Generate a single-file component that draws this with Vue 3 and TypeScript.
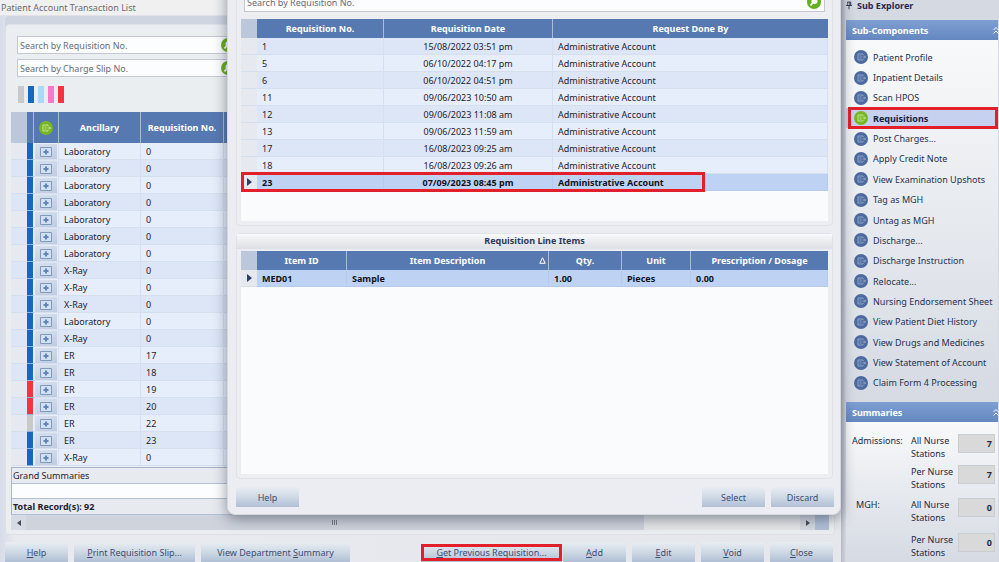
<script setup lang="ts">
interface Transaction { ancillary: string; no: number; tone: 'blue' | 'red' | 'grey' }
interface Requisition { no: number; date: string; by: string }

const tx = (ancillary: string, no = 0, tone: Transaction['tone'] = 'blue'): Transaction => ({ ancillary, no, tone })

const transactions: Transaction[] = [
  ...Array.from({ length: 7 }, () => tx('Laboratory')),
  tx('X-Ray'), tx('X-Ray'), tx('X-Ray'), tx('Laboratory'), tx('X-Ray'),
  tx('ER', 17), tx('ER', 18), tx('ER', 19, 'red'), tx('ER', 20, 'red'), tx('ER', 22, 'grey'), tx('ER', 23),
  tx('X-Ray'),
]

const by = 'Administrative Account'
const requisitions: Requisition[] = [
  { no: 1, date: '15/08/2022 03:51 pm', by },
  { no: 5, date: '06/10/2022 04:17 pm', by },
  { no: 6, date: '06/10/2022 04:51 pm', by },
  { no: 11, date: '09/06/2023 10:50 am', by },
  { no: 12, date: '09/06/2023 11:08 am', by },
  { no: 13, date: '09/06/2023 11:59 am', by },
  { no: 17, date: '16/08/2023 09:25 am', by },
  { no: 18, date: '16/08/2023 09:26 am', by },
  { no: 23, date: '07/09/2023 08:45 pm', by },
]
const selected = 23

const components: string[] = [
  'Patient Profile', 'Inpatient Details', 'Scan HPOS', 'Requisitions', 'Post Charges...', 'Apply Credit Note',
  'View Examination Upshots', 'Tag as MGH', 'Untag as MGH', 'Discharge...', 'Discharge Instruction', 'Relocate...',
  'Nursing Endorsement Sheet', 'View Patient Diet History', 'View Drugs and Medicines', 'View Statement of Account',
  'Claim Form 4 Processing',
]

const summaries = [
  { title: 'Admissions:', rows: [{ label: 'All Nurse Stations', value: 7 }, { label: 'Per Nurse Stations', value: 7 }] },
  { title: 'MGH:', rows: [{ label: 'All Nurse Stations', value: 0 }, { label: 'Per Nurse Stations', value: 0 }] },
]
</script>

<template>
  <div class="desktop">
    <main class="window">
      <h1 class="titlebar">Patient Account Transaction List</h1>
      <section class="panel">
        <div class="filters">
          <div v-for="field in ['Requisition No.', 'Charge Slip No.']" :key="field" class="search">
            <input type="text" :placeholder="`Search by ${field}`" :aria-label="`Search by ${field}`" />
            <button type="button" class="go" aria-label="Search">
              <svg viewBox="0 0 14 14"><circle cx="7" cy="7" r="7" /><circle class="lens" cx="7.500" cy="6" r="3" /><path d="M5.500 8 3.500 10.500" /></svg>
            </button>
          </div>
          <div class="legend">
            <i class="grey"></i><i class="blue"></i><i class="sky"></i><i class="pink"></i><i class="red"></i>
          </div>
        </div>
        <table class="grid transactions">
          <colgroup><col class="w16" /><col class="w7" /><col class="w25" /><col class="w82" /><col class="w83" /><col /></colgroup>
          <thead>
            <tr>
              <th class="corner"></th>
              <th></th>
              <th>
                <svg class="entry green" viewBox="0 0 14 14"><circle cx="7" cy="7" r="7" /><path d="M9 5V4H4v6h5V9M5.500 6h2M5.500 8h2M8.500 7h3M10 5.500 11.500 7 10 8.500" /></svg>
              </th>
              <th>Ancillary</th>
              <th>Requisition No.</th>
              <th></th>
            </tr>
          </thead>
          <tbody>
            <tr v-for="(t, i) in transactions" :key="i">
              <td class="marker"></td>
              <td class="tone" :class="t.tone"></td>
              <td class="expander">
                <button type="button" aria-label="Expand">
                  <svg viewBox="0 0 12 10"><path d="M.5.5h11v9H.5z" /><path class="plus" d="M6 2.500v5M3.500 5h5" /></svg>
                </button>
              </td>
              <td>{{ t.ancillary }}</td>
              <td>{{ t.no }}</td>
              <td></td>
            </tr>
          </tbody>
        </table>
        <div class="totals">
          <div>Grand Summaries</div>
          <div class="blank"></div>
          <div class="count">Total Record(s): 92</div>
        </div>
        <div class="scrollbar">
          <span class="arrow left"></span>
          <span class="thumb"><i></i><i></i><i></i></span>
          <span class="track"></span>
          <span class="arrow right"></span>
          <span class="end"></span>
        </div>
      </section>
      <footer class="actions">
        <button type="button"><span><u>H</u>elp</span></button>
        <button type="button" class="w121"><span><u>P</u>rint Requisition Slip...</span></button>
        <button type="button" class="w149"><span>View Department <u>S</u>ummary</span></button>
        <button type="button" class="previous"><span><u>G</u>et Previous Requisition...</span></button>
        <button type="button"><span><u>A</u>dd</span></button>
        <button type="button"><span><u>E</u>dit</span></button>
        <button type="button"><span><u>V</u>oid</span></button>
        <button type="button"><span><u>C</u>lose</span></button>
      </footer>
    </main>

    <aside class="explorer">
      <h2 class="heading">
        <svg viewBox="0 0 7 9"><path d="M1.500 .5h4v4M2 .5v4M4.500.5v4M0 4.500h7M3.500 4.500V9" /></svg>
        Sub Explorer
      </h2>
      <section class="group">
        <h3>Sub-Components
          <svg viewBox="0 0 8 8"><path d="M1.500 4 4 1.500 6.500 4M1.500 7.500 4 5l2.500 2.500" /></svg>
        </h3>
        <nav>
          <a v-for="c in components" :key="c" href="#" :class="{ active: c === 'Requisitions' }">
            <svg class="entry" :class="{ green: c === 'Requisitions' }" viewBox="0 0 14 14"><circle cx="7" cy="7" r="7" /><path d="M9 5V4H4v6h5V9M5.500 6h2M5.500 8h2M8.500 7h3M10 5.500 11.500 7 10 8.500" /></svg>
            <span>{{ c }}</span>
          </a>
        </nav>
      </section>
      <section class="group">
        <h3>Summaries
          <svg viewBox="0 0 8 8"><path d="M1.500 4 4 1.500 6.500 4M1.500 7.500 4 5l2.500 2.500" /></svg>
        </h3>
        <div class="summaries">
          <div v-for="s in summaries" :key="s.title" class="summary">
            <span class="name">{{ s.title }}</span>
            <div class="stations">
              <label v-for="r in s.rows" :key="r.label"><span>{{ r.label }}</span><input type="text" readonly :value="r.value" /></label>
            </div>
          </div>
        </div>
      </section>
    </aside>

    <section class="dialog" role="dialog" aria-label="Previous requisitions">
      <div class="frame">
        <div class="lookup">
          <div class="search">
            <input type="text" placeholder="Search by Requisition No." aria-label="Search previous requisitions" />
            <button type="button" class="go" aria-label="Search">
              <svg viewBox="0 0 14 14"><circle cx="7" cy="7" r="7" /><circle class="lens" cx="7.500" cy="6" r="3" /><path d="M5.500 8 3.500 10.500" /></svg>
            </button>
          </div>
        </div>
        <div class="sheet upper">
          <table class="grid">
            <colgroup><col class="w16" /><col class="w127" /><col class="w169" /><col /></colgroup>
            <thead>
              <tr><th class="corner"></th><th>Requisition No.</th><th>Requisition Date</th><th>Request Done By</th></tr>
            </thead>
            <tbody>
              <tr v-for="r in requisitions" :key="r.no" :class="{ selected: r.no === selected }">
                <td class="marker"><span v-if="r.no === selected" class="pointer"></span><span v-if="r.no === selected" class="callout"></span></td>
                <td>{{ r.no }}</td>
                <td class="center">{{ r.date }}</td>
                <td>{{ r.by }}</td>
              </tr>
            </tbody>
          </table>
        </div>
      </div>
      <div class="frame items">
        <h2>Requisition Line Items</h2>
        <div class="sheet lower">
          <table class="grid">
            <colgroup><col class="w16" /><col class="w90" /><col class="w202" /><col class="w73" /><col class="w69" /><col /></colgroup>
            <thead>
              <tr>
                <th class="corner"></th><th>Item ID</th>
                <th class="sorted">Item Description<svg viewBox="0 0 7 7"><path d="M3.500.8 6.200 6.300H.8z" /></svg></th>
                <th>Qty.</th><th>Unit</th><th>Prescription / Dosage</th>
              </tr>
            </thead>
            <tbody>
              <tr class="selected">
                <td class="marker"><span class="pointer"></span></td>
                <td>MED01</td><td>Sample</td><td>1.00</td><td>Pieces</td><td>0.00</td>
              </tr>
            </tbody>
          </table>
        </div>
      </div>
      <footer>
        <button type="button">Help</button>
        <span class="spacer"></span>
        <button type="button">Select</button>
        <button type="button">Discard</button>
      </footer>
    </section>
  </div>
</template>

<style>
body { overflow: hidden; }
</style>

<style scoped>
* { box-sizing: border-box; }
.desktop {
  position: relative; display: flex; height: 100vh; overflow: hidden;
  font: 9px/13px "Noto Sans", "Open Sans", sans-serif; color: #1f212b; background: #e6e7ec;
}
h1, h2, h3 { margin: 0; font-size: inherit; font-weight: 700; }
button, input { font: inherit; color: inherit; }
button { border: 0; padding: 0; }
u { text-underline-offset: 1px; }

.window { flex: 1; min-width: 0; display: flex; flex-direction: column; background: linear-gradient(90deg, #d7dce9, #e8eaf0 2%, #e6e7ec); }
.titlebar { height: 18px; padding: 1px; font-weight: 400; font-size: 9px; color: #6c6c6c; background: #f0f0f1; border-bottom: 1px solid #e0e2e8; }
.panel { margin: 8px 6px 0 5px; padding: 11px 5px 4px; border: 1px solid #dde1e7; border-radius: 4px; background: #ebeef0; box-shadow: 0 -8px 0 #cfd6e2; }
.filters { padding: 0 6px; display: flex; flex-direction: column; gap: 5px; }
.filters .search { max-width: 222px; }
.search { display: flex; align-items: center; height: 18px; border: 1px solid #c3c8d2; background: #fcfdff; }
.search input { flex: 1; min-width: 0; height: 100%; padding: 1px 2px 0; border: 0; background: transparent; outline: 0; }
.search input::placeholder { color: #686c75; opacity: 1; }
.legend { display: flex; gap: 4px; padding: 4px 1px 9px; }
.legend i { width: 6px; height: 17px; }
.grey { background: #c9c9c9; } .blue { background: #1766c0; } .sky { background: #add8fb; } .pink { background: #fb78cb; } .red { background: #f5343d; }

.grid { width: 100%; table-layout: fixed; border-collapse: separate; border-spacing: 0; }
.grid th { height: 19px; padding: 0; color: #fff; font-weight: 700; background: #5779b1; border-right: 1px solid #a9bbd9; }
.grid th:last-child { border-right: 0; }
.grid th.corner { background: #bdc7dc; border-right: 0; }
.grid td { height: 17px; padding: 0 5px; line-height: 15px; white-space: nowrap; border-bottom: 1px solid #d5dfef; border-right: 1px solid #d5dfef; background: #e7eefb; }
.grid tr:nth-child(odd) td { background: #dce6f7; }
.grid td.marker { padding: 0; background: #e6e9ef; border-right: 0; }
.grid tr:nth-child(odd) td.marker { background: #e6e9ef; }
.grid tr.selected td:not(.marker) { background: #bed3f4; font-weight: 700; color: #10131c; border-color: #b6caeb; }
.grid .center { text-align: center; }
.w7 { width: 7px; } .w16 { width: 16px; } .w25 { width: 25px; } .w69 { width: 69px; } .w73 { width: 73px; }
.w82 { width: 82px; } .w83 { width: 83px; } .w90 { width: 90px; } .w127 { width: 127px; } .w169 { width: 169px; } .w202 { width: 202px; }

.transactions th { height: 31px; }
.transactions th .entry { display: block; margin: 0 auto; }
.transactions tr:nth-child(odd) td { background: #e7eefb; }
.transactions tr:nth-child(even) td { background: #dce6f7; }
.transactions tr td.tone { padding: 0; border-bottom-color: #8fb2de; border-right-color: #e7eefb; }
.transactions tr td.tone.blue { background: #1766c0; }
.transactions tr td.tone.red { background: #f5343d; }
.transactions tr td.tone.grey { background: #c9c9c9; }
.transactions tr td.expander { padding: 1px 1px 0; }
.expander button { display: flex; justify-content: center; align-items: center; width: 100%; height: 15px; background: linear-gradient(160deg, #d8e1ee, #bfcbe0); }
.expander svg { width: 12px; height: 10px; fill: #d3e0f2; stroke: #7f9abf; }
.expander .plus { stroke: #6286ba; stroke-width: 2; }

.entry { flex: none; width: 14px; height: 14px; fill: none; stroke: #8ea3c8; stroke-width: 1; }
.entry circle { fill: #4d6a9f; stroke: none; }
.entry.green { stroke: #c2e48a; }
.entry.green circle { fill: #77b726; }

.totals { margin-top: 1px; border: 1px solid #a9b5cb; border-bottom: 0; background: #e7eaef; }
.totals div { height: 16px; padding: 1px; border-bottom: 1px solid #b3bfd3; }
.totals .blank { height: 15px; background: #fcfdfe; }
.totals .count { font-weight: 700; }
.scrollbar { display: flex; height: 15px; background: #d6dae2; }
.scrollbar .arrow { display: flex; width: 15px; align-items: center; justify-content: center; }
.arrow::before { content: ""; border: 3px solid transparent; }
.arrow.left::before { border-right: 4px solid #454b57; border-left: 0; }
.arrow.right::before { border-left: 4px solid #454b57; border-right: 0; }
.thumb { flex: 617; display: flex; gap: 1px; align-items: center; justify-content: center; background: #ced3dc; }
.thumb i { width: 1px; height: 5px; background: #777d88; }
.track { flex: 156; background: #e6e7e9; }
.end { width: 14px; background: #b3c1d7; }

.actions { display: flex; gap: 6px; padding: 7px 8px 0 5px; }
.actions button, .dialog footer button { flex: none; width: 63px; height: 20px; color: #3c4d73; background: linear-gradient(#e8edf2, #cfd9e5 50%, #b0bfd5); }
.actions .w121 { width: 121px; } .actions .w149 { width: 149px; }
.actions .previous { position: relative; width: 141px; margin-left: auto; margin-right: -5px; }
.actions .previous::after { content: ""; position: absolute; inset: 2px 0 1px; border: 3px solid #e32029; }

.explorer { flex: none; width: 158px; padding: 0 1px 0 5px; background: linear-gradient(90deg, #b4b9c2, #d5d9e1 5px); }
.heading { display: flex; align-items: center; gap: 5px; height: 20px; padding-bottom: 10px; color: #1f2b4c; }
.heading svg { width: 6px; height: 9px; fill: none; stroke: #222c44; }
.group h3 { display: flex; justify-content: space-between; align-items: center; height: 20px; padding: 0 0 0 6px; color: #fff; background: linear-gradient(#7f9fd3, #6487c0); }
.group h3 svg { width: 8px; height: 8px; margin-right: -2px; fill: none; stroke: #fff; }
nav { display: flex; flex-direction: column; height: 362px; padding: 7px 0 9px; background: linear-gradient(#f8f9fa, #d5dae3); }
nav a { position: relative; flex: 1; display: flex; align-items: center; gap: 5px; padding-left: 8px; color: #24314f; text-decoration: none; white-space: nowrap; }
nav a.active { font-weight: 700; color: #14213f; background: #c5d1ee; }
nav a.active::after { content: ""; position: absolute; inset: -1px 0 -1px 2px; border: 3px solid #e32029; }
.summaries { height: 140px; padding: 12px 3px 0 6px; background: linear-gradient(#f8f9fa, #d5dae3); color: #242a3e; }
.summary { display: flex; margin-bottom: 7px; }
.summary .name { width: 59px; }
.summary + .summary .name { padding-left: 4px; }
.stations { flex: 1; display: flex; flex-direction: column; gap: 5px; }
.summary + .summary .stations { gap: 9px; }
.stations label { display: flex; justify-content: space-between; }
.stations label span { width: 47px; }
.stations input { width: 37px; height: 19px; padding: 0 2px; border: 1px solid #c9ccd1; text-align: right; font-weight: 700; background: #d9d9d9; }

.dialog { position: absolute; left: 227px; right: 158px; top: -20px; height: 535px; padding: 8px 6px 7px 8px; display: flex; flex-direction: column; border: 1px solid #d5d8df; border-radius: 8px; background: #ebedf3; box-shadow: 0 4px 14px rgba(40, 50, 70, .5); }
.frame { margin-right: 1px; border: 1px solid #dfe2e8; border-radius: 4px; padding: 0 4px 4px; background: #eceef1; }
.lookup { padding: 2px 3px 7px; }
.lookup .search { height: 20px; }
.go { flex: none; width: 14px; height: 14px; margin-right: 3px; background: transparent; }
.go svg { display: block; width: 14px; height: 14px; fill: #65b11d; }
.go .lens { fill: #fff; }
.go path { stroke: #fff; stroke-width: 2; }
.sheet { background: #fafbfd; }
.upper { height: 202px; }
.selected { position: relative; }
.pointer { display: block; width: 0; margin: 0 auto; border: 4px solid transparent; border-left: 5px solid #2e3f66; border-right: 0; }
.callout { position: absolute; left: 0; top: -2px; width: 79%; height: 20px; border: 3px solid #e32029; }
.items { flex: 1; display: flex; flex-direction: column; margin-top: 7px; }
.items h2 { margin: 0 -4px 2px; height: 15px; text-align: center; color: #2a3859; background: linear-gradient(#f8f9fb, #dcdfe5); }
.lower { flex: 1; }
.sorted { position: relative; }
.sorted svg { position: absolute; right: 2px; top: 6px; width: 7px; height: 7px; fill: none; stroke: #fff; }
.dialog footer { display: flex; gap: 6px; padding-top: 8px; }
.spacer { flex: 1; }
</style>
